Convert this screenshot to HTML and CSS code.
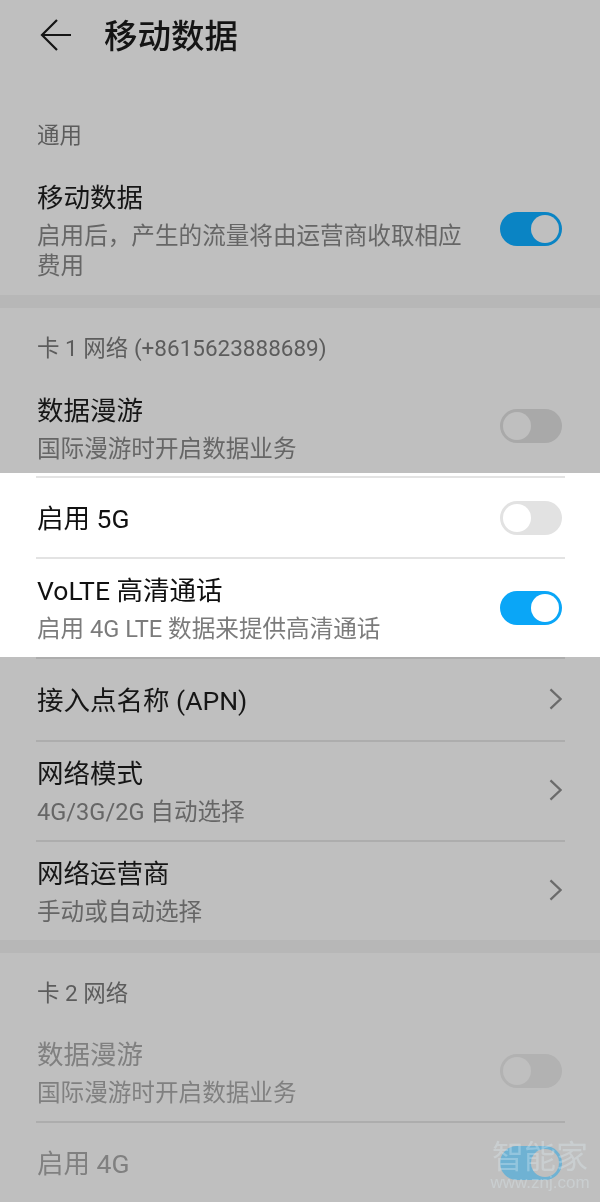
FILE: index.html
```html
<!DOCTYPE html>
<html lang="zh-CN">
<head>
<meta charset="utf-8">
<title>移动数据</title>
<link rel="stylesheet" href="styles.css">
</head>
<body>
<main class="screen">
  <header class="header">
    <svg class="back" viewBox="0 0 32 32" aria-hidden="true"><path d="M31 16H2M17 1 2 16l15 15"/></svg>
    <h1 class="page-title">移动数据</h1>
  </header>

  <section class="section section--first">
    <div class="label">通用</div>
    <div class="row row--tall">
      <div class="text">
        <div class="title">移动数据</div>
        <div class="sub">启用后，产生的流量将由运营商收取相应费用</div>
      </div>
      <span class="toggle toggle--on-dim"><i></i></span>
    </div>
  </section>

  <div class="band"></div>

  <section class="section">
    <div class="label">卡 1 网络 (+8615623888689)</div>
    <div class="row row--two row--cut">
      <div class="text">
        <div class="title">数据漫游</div>
        <div class="sub">国际漫游时开启数据业务</div>
      </div>
      <span class="toggle toggle--off-dim"><i></i></span>
    </div>
    <div class="highlight">
      <div class="row row--one row--line">
        <div class="text"><div class="title">启用 5G</div></div>
        <span class="toggle toggle--off"><i></i></span>
      </div>
      <div class="row row--two row--line">
        <div class="text">
          <div class="title">VoLTE 高清通话</div>
          <div class="sub">启用 4G LTE 数据来提供高清通话</div>
        </div>
        <span class="toggle toggle--on"><i></i></span>
      </div>
    </div>
    <div class="row row--apn row--line">
      <div class="text"><div class="title">接入点名称 (APN)</div></div>
      <svg class="chevron" viewBox="0 0 14 24" aria-hidden="true"><path d="M1.5 1.5 12.5 12 1.5 22.5"/></svg>
    </div>
    <div class="row row--two row--line">
      <div class="text">
        <div class="title">网络模式</div>
        <div class="sub">4G/3G/2G 自动选择</div>
      </div>
      <svg class="chevron" viewBox="0 0 14 24" aria-hidden="true"><path d="M1.5 1.5 12.5 12 1.5 22.5"/></svg>
    </div>
    <div class="row row--two row--line">
      <div class="text">
        <div class="title">网络运营商</div>
        <div class="sub">手动或自动选择</div>
      </div>
      <svg class="chevron" viewBox="0 0 14 24" aria-hidden="true"><path d="M1.5 1.5 12.5 12 1.5 22.5"/></svg>
    </div>
  </section>

  <div class="band"></div>

  <section class="section section--disabled">
    <div class="label">卡 2 网络</div>
    <div class="row row--two">
      <div class="text">
        <div class="title">数据漫游</div>
        <div class="sub">国际漫游时开启数据业务</div>
      </div>
      <span class="toggle toggle--off-disabled"><i></i></span>
    </div>
    <div class="row row--one row--line">
      <div class="text"><div class="title">启用 4G</div></div>
      <span class="toggle toggle--on-disabled"><i></i></span>
    </div>
  </section>

  <div class="watermark">
    <div class="wm-name">智能家</div>
    <div class="wm-url">www.znj.com</div>
  </div>
</main>
</body>
</html>
```

FILE: styles.css
```css
* { box-sizing: border-box; }
html, body { margin: 0; padding: 0; }
body {
  width: 600px;
  height: 1202px;
  overflow: hidden;
  background: #bfbfbf;
  font-family: "Roboto", "Noto Sans CJK SC", "Noto Sans", sans-serif;
}
.screen { position: relative; height: 1202px; overflow: hidden; filter: blur(0.35px); }

.header { display: flex; align-items: center; height: 72px; padding-left: 40px; margin-bottom: 24px; }
.back { width: 32px; height: 32px; margin-top: -2px; fill: none; stroke: #151515; stroke-width: 2.2; }
.page-title { margin: 2px 0 0 32px; font-size: 33.5px; line-height: 40px; font-weight: 500; color: #141414; }

.label { height: 68px; padding: 24px 0 0 37px; font-size: 22.5px; line-height: 32px; color: #5c5c5c; }
.section--first .label { padding-top: 23px; }

.band { height: 13px; background: #b7b7b7; }

.row { display: flex; align-items: center; justify-content: space-between; margin: 0 35px 0 36px; padding: 0 3px 0 1px; }
.row--tall { height: 131px; align-items: flex-start; padding-top: 15px; }
.row--two { height: 100px; }
.row--cut { height: 97px; padding-top: 3px; }
.row--one { height: 81px; }
.row--apn { height: 83px; }
.row--line { border-top: 2px solid #adadad; }

.highlight { background: #fff; padding-top: 3px; }
.highlight .row--line { border-top-color: #e3e3e3; }
.highlight .sub { color: #7b7b7b; }
.highlight .title { color: #111; }

.text { min-width: 0; margin-top: 2px; }
.title { font-size: 26.5px; line-height: 34px; color: #161616; white-space: nowrap; }
.sub { width: 430px; margin-top: 6px; font-size: 23.6px; line-height: 30px; color: #666; }
.row--cut .text { margin-top: 6px; }
.section--disabled .row--two .text { margin-top: 4px; }

.toggle { position: relative; flex: none; display: block; width: 62px; height: 34px; border-radius: 17px; }
.toggle i { position: absolute; top: 3px; width: 28px; height: 28px; border-radius: 50%; }
.row--tall .toggle { margin-top: 33px; }
.toggle--on-dim { background: #0a84c4; }
.toggle--on-dim i { right: 3px; background: #bfbfbf; }
.toggle--off-dim { background: #a9a9a9; }
.toggle--off-dim i { left: 3px; background: #bfbfbf; }
.toggle--off { background: #e2e2e2; }
.toggle--off i { left: 3px; background: #fff; }
.toggle--on { background: #0aa6f7; }
.toggle--on i { right: 3px; background: #fff; }
.toggle--off-disabled { background: #b2b2b2; }
.toggle--off-disabled i { left: 3px; background: #bfbfbf; }
.toggle--on-disabled { background: #6fb2d3; }
.toggle--on-disabled i { right: 3px; background: #bfbfbf; }

.chevron { flex: none; width: 13px; height: 22px; margin-top: -2px; fill: none; stroke: #6b6b6b; stroke-width: 2.4; }

.section--disabled .title { color: #808080; }
.section--disabled .sub { color: #808080; }

.watermark { position: absolute; left: 489px; top: 1141px; width: 102px; color: rgba(225, 238, 245, 0.32); text-align: center; }
.wm-name { font-size: 32px; line-height: 33px; }
.wm-url { margin-top: 1px; font-family: "Liberation Sans", sans-serif; font-size: 17px; line-height: 16px; white-space: nowrap; }
```
